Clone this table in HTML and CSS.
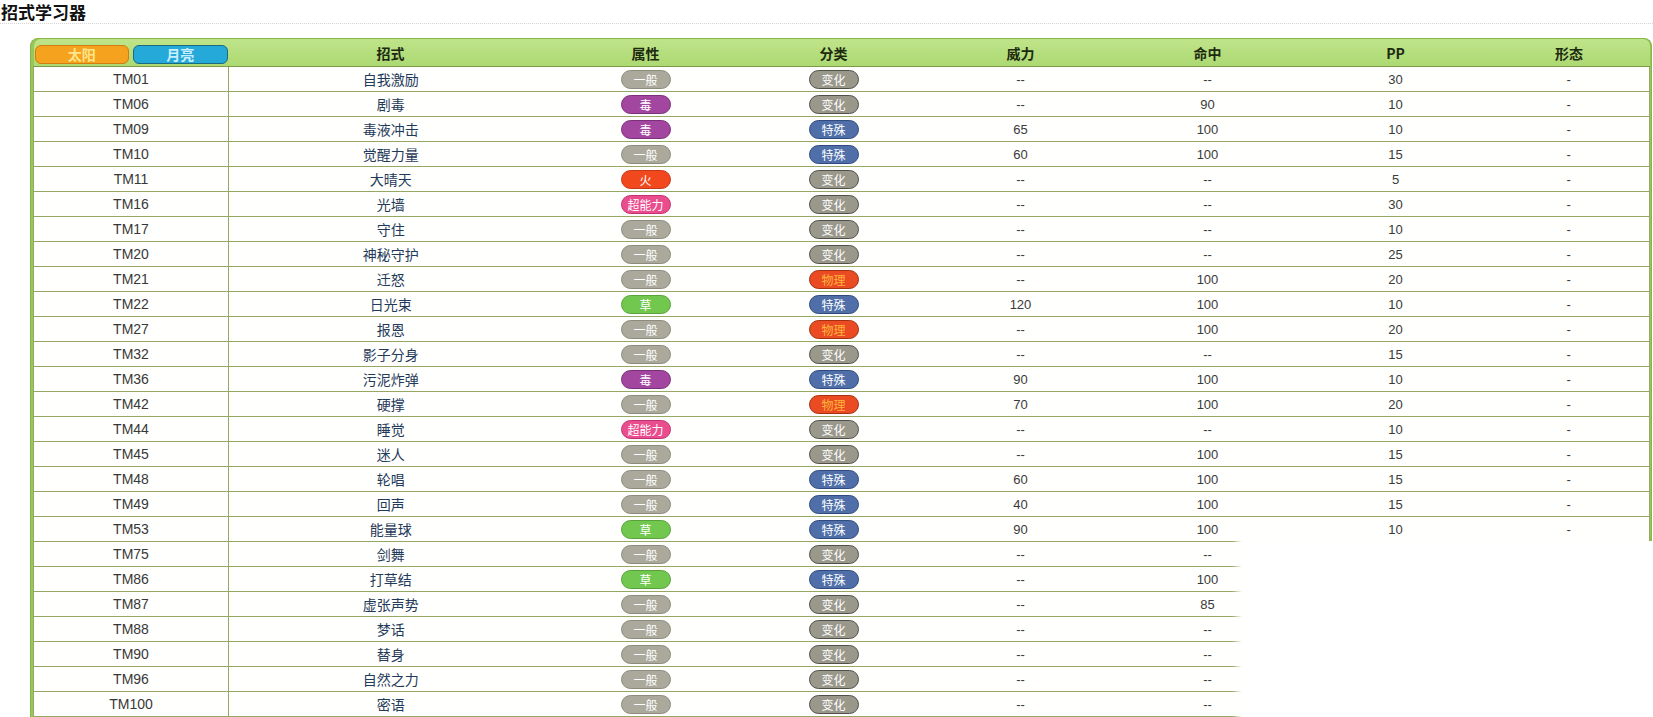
FILE: index.html
```html
<!DOCTYPE html>
<html lang="zh">
<head>
<meta charset="utf-8">
<title>招式学习器</title>
<link rel="stylesheet" href="styles.css">
</head>
<body>
<div class="page">
  <h2 class="title">招式学习器</h2>
  <div class="panel">
    <table class="moves">
      <colgroup>
        <col class="c1"><col class="c2"><col class="c3"><col class="c4"><col class="c5"><col class="c6"><col class="c7"><col class="c8">
      </colgroup>
      <thead>
        <tr>
          <th class="tabs-cell"><div class="tabs"><span class="tab sun">太阳</span><span class="tab moon">月亮</span></div></th>
          <th>招式</th><th>属性</th><th>分类</th><th>威力</th><th>命中</th><th>PP</th><th>形态</th>
        </tr>
      </thead>
      <tbody>
        <tr><td class="tm">TM01</td><td class="nm">自我激励</td><td><span class="b normal">一般</span></td><td><span class="b status">变化</span></td><td>--</td><td>--</td><td>30</td><td>-</td></tr>
        <tr><td class="tm">TM06</td><td class="nm">剧毒</td><td><span class="b poison">毒</span></td><td><span class="b status">变化</span></td><td>--</td><td>90</td><td>10</td><td>-</td></tr>
        <tr><td class="tm">TM09</td><td class="nm">毒液冲击</td><td><span class="b poison">毒</span></td><td><span class="b special">特殊</span></td><td>65</td><td>100</td><td>10</td><td>-</td></tr>
        <tr><td class="tm">TM10</td><td class="nm">觉醒力量</td><td><span class="b normal">一般</span></td><td><span class="b special">特殊</span></td><td>60</td><td>100</td><td>15</td><td>-</td></tr>
        <tr><td class="tm">TM11</td><td class="nm">大晴天</td><td><span class="b fire">火</span></td><td><span class="b status">变化</span></td><td>--</td><td>--</td><td>5</td><td>-</td></tr>
        <tr><td class="tm">TM16</td><td class="nm">光墙</td><td><span class="b psychic">超能力</span></td><td><span class="b status">变化</span></td><td>--</td><td>--</td><td>30</td><td>-</td></tr>
        <tr><td class="tm">TM17</td><td class="nm">守住</td><td><span class="b normal">一般</span></td><td><span class="b status">变化</span></td><td>--</td><td>--</td><td>10</td><td>-</td></tr>
        <tr><td class="tm">TM20</td><td class="nm">神秘守护</td><td><span class="b normal">一般</span></td><td><span class="b status">变化</span></td><td>--</td><td>--</td><td>25</td><td>-</td></tr>
        <tr><td class="tm">TM21</td><td class="nm">迁怒</td><td><span class="b normal">一般</span></td><td><span class="b physical">物理</span></td><td>--</td><td>100</td><td>20</td><td>-</td></tr>
        <tr><td class="tm">TM22</td><td class="nm">日光束</td><td><span class="b grass">草</span></td><td><span class="b special">特殊</span></td><td>120</td><td>100</td><td>10</td><td>-</td></tr>
        <tr><td class="tm">TM27</td><td class="nm">报恩</td><td><span class="b normal">一般</span></td><td><span class="b physical">物理</span></td><td>--</td><td>100</td><td>20</td><td>-</td></tr>
        <tr><td class="tm">TM32</td><td class="nm">影子分身</td><td><span class="b normal">一般</span></td><td><span class="b status">变化</span></td><td>--</td><td>--</td><td>15</td><td>-</td></tr>
        <tr><td class="tm">TM36</td><td class="nm">污泥炸弹</td><td><span class="b poison">毒</span></td><td><span class="b special">特殊</span></td><td>90</td><td>100</td><td>10</td><td>-</td></tr>
        <tr><td class="tm">TM42</td><td class="nm">硬撑</td><td><span class="b normal">一般</span></td><td><span class="b physical">物理</span></td><td>70</td><td>100</td><td>20</td><td>-</td></tr>
        <tr><td class="tm">TM44</td><td class="nm">睡觉</td><td><span class="b psychic">超能力</span></td><td><span class="b status">变化</span></td><td>--</td><td>--</td><td>10</td><td>-</td></tr>
        <tr><td class="tm">TM45</td><td class="nm">迷人</td><td><span class="b normal">一般</span></td><td><span class="b status">变化</span></td><td>--</td><td>100</td><td>15</td><td>-</td></tr>
        <tr><td class="tm">TM48</td><td class="nm">轮唱</td><td><span class="b normal">一般</span></td><td><span class="b special">特殊</span></td><td>60</td><td>100</td><td>15</td><td>-</td></tr>
        <tr><td class="tm">TM49</td><td class="nm">回声</td><td><span class="b normal">一般</span></td><td><span class="b special">特殊</span></td><td>40</td><td>100</td><td>15</td><td>-</td></tr>
        <tr><td class="tm">TM53</td><td class="nm">能量球</td><td><span class="b grass">草</span></td><td><span class="b special">特殊</span></td><td>90</td><td>100</td><td>10</td><td>-</td></tr>
        <tr><td class="tm">TM75</td><td class="nm">剑舞</td><td><span class="b normal">一般</span></td><td><span class="b status">变化</span></td><td>--</td><td>--</td><td></td><td></td></tr>
        <tr><td class="tm">TM86</td><td class="nm">打草结</td><td><span class="b grass">草</span></td><td><span class="b special">特殊</span></td><td>--</td><td>100</td><td></td><td></td></tr>
        <tr><td class="tm">TM87</td><td class="nm">虚张声势</td><td><span class="b normal">一般</span></td><td><span class="b status">变化</span></td><td>--</td><td>85</td><td></td><td></td></tr>
        <tr><td class="tm">TM88</td><td class="nm">梦话</td><td><span class="b normal">一般</span></td><td><span class="b status">变化</span></td><td>--</td><td>--</td><td></td><td></td></tr>
        <tr><td class="tm">TM90</td><td class="nm">替身</td><td><span class="b normal">一般</span></td><td><span class="b status">变化</span></td><td>--</td><td>--</td><td></td><td></td></tr>
        <tr><td class="tm">TM96</td><td class="nm">自然之力</td><td><span class="b normal">一般</span></td><td><span class="b status">变化</span></td><td>--</td><td>--</td><td></td><td></td></tr>
        <tr><td class="tm">TM100</td><td class="nm">密语</td><td><span class="b normal">一般</span></td><td><span class="b status">变化</span></td><td>--</td><td>--</td><td></td><td></td></tr>
      </tbody>
    </table>
  </div>
  <div class="erase"></div>
</div>
</body>
</html>
```
FILE: styles.css
```css
html, body {
  margin: 0;
  padding: 0;
  background: #fff;
}
body {
  font-family: "Liberation Sans", "Noto Sans CJK SC", sans-serif;
  color: #333;
  overflow: hidden;
}
.page {
  position: relative;
  width: 1653px;
  height: 717px;
  overflow: hidden;
}
.title {
  margin: 0;
  padding: 1px 0 0 1px;
  height: 22px;
  line-height: 22px;
  font-size: 17px;
  font-weight: bold;
  color: #111;
  font-family: "Noto Sans CJK SC", sans-serif;
  border-bottom: 1px dotted #d4d4d4;
}
.panel {
  margin: 14px 1px 0 30px;
  box-sizing: border-box;
  border: 1px solid #86b54a;
  border-bottom: none;
  border-radius: 8px 8px 0 0;
  padding: 0 2px;
  background: #96c757;
}
.moves {
  width: 1616px;
  table-layout: fixed;
  border-collapse: collapse;
  border-spacing: 0;
}
.c1 { width: 195px; }
.c2 { width: 324px; }
.c3 { width: 186px; }
.c4 { width: 190px; }
.c5 { width: 184px; }
.c6 { width: 190px; }
.c7 { width: 186px; }
.c8 { width: 161px; }
.moves thead th {
  height: 27px;
  padding: 0;
  background: linear-gradient(#bfe48a, #acd972);
  font-family: "Noto Sans CJK SC", sans-serif;
  font-size: 14px;
  font-weight: bold;
  color: #1e2a10;
  text-align: center;
  vertical-align: middle;
  border-bottom: 1px solid #7d9a48;
}
.moves thead th:first-child { border-top-left-radius: 7px; }
.moves thead th:last-child { border-top-right-radius: 7px; }
.tabs {
  display: flex;
  gap: 4px;
  padding: 3px 1px 0 1px;
}
.tab {
  flex: 1;
  height: 17px;
  line-height: 17px;
  border-radius: 6px;
  font-size: 14px;
  font-weight: bold;
  text-align: center;
}
.sun {
  background: #f5a21e;
  border: 1px solid #d27d10;
  color: #ffe58a;
}
.moon {
  background: #25a9d8;
  border: 1px solid #1a6b80;
  color: #c9efff;
}
.moves tbody td {
  height: 24px;
  padding: 0;
  background: #fffffd;
  border-bottom: 1px solid #95a763;
  text-align: center;
  vertical-align: middle;
  font-size: 13px;
  color: #3a3a3a;
}
.moves tbody td:first-child {
  border-left: 1px solid #95a763;
}
.moves tbody td:last-child {
  border-right: 1px solid #95a763;
}
.moves tbody td.tm {
  border-right: 1px solid #95a763;
  font-size: 14px;
  color: #383838;
}
.moves tbody td.nm {
  font-family: "Noto Sans CJK SC", sans-serif;
  font-size: 14px;
  color: #1f3a5a;
}
.b {
  display: inline-block;
  box-sizing: border-box;
  width: 50px;
  height: 19px;
  line-height: 17px;
  border-radius: 10px;
  border: 1px solid;
  font-family: "Noto Sans CJK SC", sans-serif;
  font-size: 12px;
  color: #fff;
  vertical-align: middle;
  white-space: nowrap;
  letter-spacing: 0;
}
.normal { background: #aaa99b; border-color: #8c8b7c; }
.poison { background: #a2469f; border-color: #7c2f7a; }
.fire { background: #f2481e; border-color: #c6381a; }
.psychic { background: #ea4d8d; border-color: #c23272; }
.grass { background: #72c84f; border-color: #57a23b; }
.status { background: #9a988b; border-color: #50504a; }
.special { background: #506fa9; border-color: #2e4a7e; }
.physical { background: #ea4b22; border-color: #a33010; color: #ffb43c; }
.erase {
  position: absolute;
  left: 1232px;
  top: 541px;
  right: 0;
  bottom: 0;
  background: linear-gradient(to right, rgba(255,255,255,0) 0, #fff 10px);
}
```
